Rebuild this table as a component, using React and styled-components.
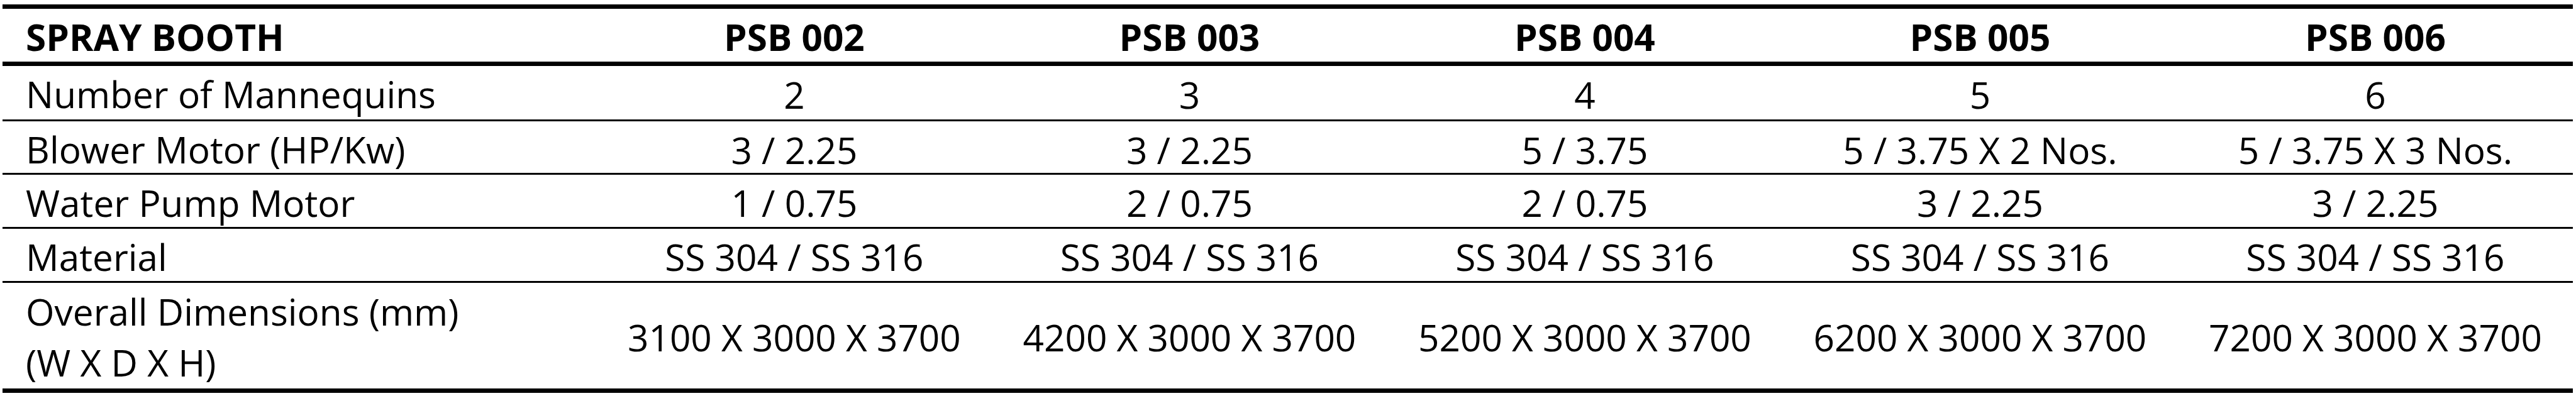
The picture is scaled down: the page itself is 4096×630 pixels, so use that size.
import React from 'react';
import styled, { createGlobalStyle } from 'styled-components';

const K = 0.979;
const px = (v) => `${(v * K).toFixed(2)}px`;

const GlobalStyle = createGlobalStyle`
  html, body { margin: 0; padding: 0; background: #ffffff; }
  body {
    font-family: "Open Sans", "Noto Sans", "Liberation Sans", sans-serif;
    color: #000000;
  }
`;

const Page = styled.div`
  padding: ${px(7)} 0 0 ${px(4)};
`;

const SpecTable = styled.div`
  width: ${px(4175)};
  border-top: ${px(7.6)} solid #000;
  font-size: 58.5px;
`;

const Row = styled.div`
  display: grid;
  grid-template-columns: ${px(965)} repeat(5, 1fr);
  align-items: center;
  height: ${(p) => px(p.$h)};
  padding-top: ${px(4)};
  box-sizing: border-box;
  border-bottom: ${(p) => px(p.$rule)} solid #000;
  font-weight: ${(p) => (p.$head ? 700 : 400)};
`;

const Label = styled.div`
  padding-left: ${px(38)};
  line-height: ${px(83)};
  white-space: nowrap;
`;

const Value = styled.div`
  text-align: center;
  white-space: nowrap;
`;

const models = ['PSB 002', 'PSB 003', 'PSB 004', 'PSB 005', 'PSB 006'];

const rows = [
  { label: ['Number of Mannequins'], values: ['2', '3', '4', '5', '6'], h: 89.6, rule: 3.6 },
  {
    label: ['Blower Motor (HP/Kw)'],
    values: ['3 / 2.25', '3 / 2.25', '5 / 3.75', '5 / 3.75 X 2 Nos.', '5 / 3.75 X 3 Nos.'],
    h: 86.6,
    rule: 3.6,
  },
  {
    label: ['Water Pump Motor'],
    values: ['1 / 0.75', '2 / 0.75', '2 / 0.75', '3 / 2.25', '3 / 2.25'],
    h: 87.6,
    rule: 3.6,
  },
  {
    label: ['Material'],
    values: Array(5).fill('SS 304 / SS 316'),
    h: 88.6,
    rule: 3.6,
  },
  {
    label: ['Overall Dimensions (mm)', '(W X D X H)'],
    values: [
      '3100 X 3000 X 3700',
      '4200 X 3000 X 3700',
      '5200 X 3000 X 3700',
      '6200 X 3000 X 3700',
      '7200 X 3000 X 3700',
    ],
    h: 178,
    rule: 8,
  },
];

export default function App() {
  return (
    <Page>
      <GlobalStyle />
      <SpecTable>
        <Row $head $h={93.6} $rule={7.6}>
          <Label>SPRAY BOOTH</Label>
          {models.map((m) => (
            <Value key={m}>{m}</Value>
          ))}
        </Row>
        {rows.map((r) => (
          <Row key={r.label[0]} $h={r.h} $rule={r.rule}>
            <Label>
              {r.label.map((l, i) => (
                <React.Fragment key={l}>
                  {i > 0 && <br />}
                  {l}
                </React.Fragment>
              ))}
            </Label>
            {r.values.map((v, i) => (
              <Value key={i}>{v}</Value>
            ))}
          </Row>
        ))}
      </SpecTable>
    </Page>
  );
}
